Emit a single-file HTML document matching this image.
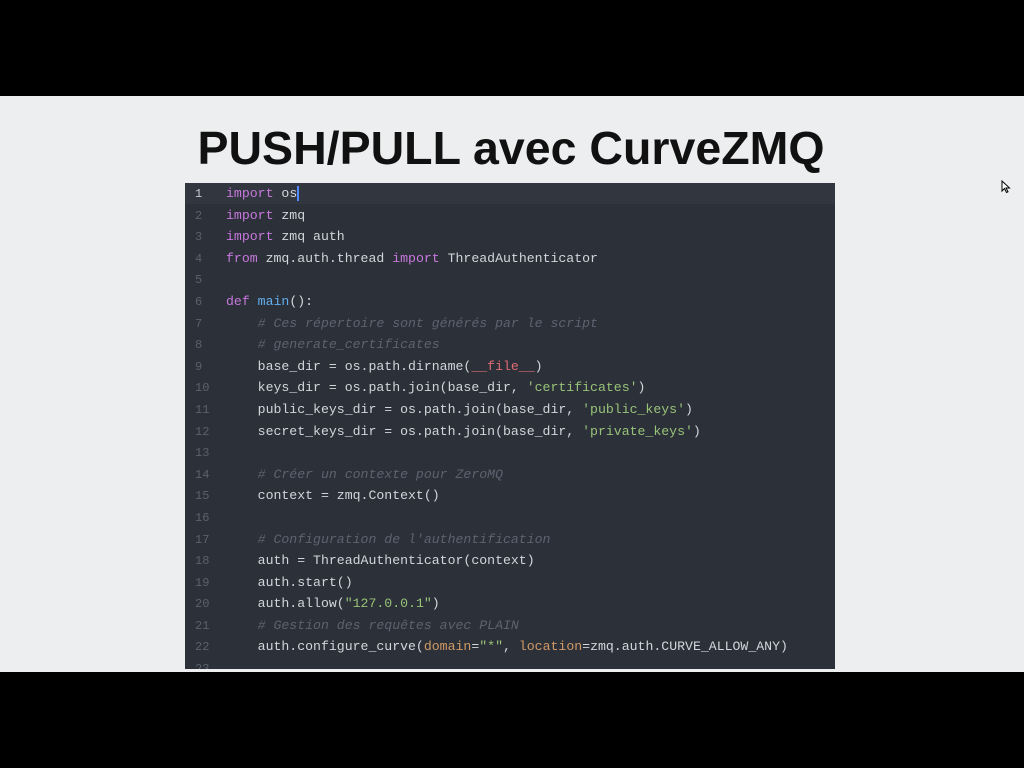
<!DOCTYPE html>
<html><head><meta charset="utf-8"><style>
html,body{margin:0;padding:0;width:1024px;height:768px;background:#000;overflow:hidden}
.slide{position:absolute;left:0;top:96px;width:1024px;height:576px;background:#eceeef}
h1{position:absolute;left:0;width:1024px;top:25px;margin:0;text-align:center;font:bold 46.5px "Liberation Sans",sans-serif;color:#111;text-indent:-2px}
.code{position:absolute;left:185px;top:87px;width:650px;height:486px;background:#2c3038;overflow:hidden}
.hl{position:absolute;left:0;top:0;width:650px;height:21px;background:#32363e}
pre{position:absolute;left:0;top:0;margin:0;font:13.2px/21.6px "Liberation Mono",monospace;color:#d2d6dc}
.n{display:inline-block;vertical-align:top;line-height:23px;height:21.6px;width:41px;padding-left:10px;box-sizing:border-box;color:#5b616b;font-size:12px}
.k{color:#c678dd}.f{color:#61afef}.c{color:#5c6370;font-style:italic}.s{color:#98c379}.r{color:#e06c75}.o{color:#d19a66}
.cur{border-right:2px solid #528bff}
</style></head><body>
<div class="slide">
<h1>PUSH/PULL avec CurveZMQ</h1>
<div class="code"><div class="hl"></div>
<pre><span class="n" style="color:#c8ccd2">1</span><span class="k">import</span> <span class="cur">os</span>
<span class="n">2</span><span class="k">import</span> zmq
<span class="n">3</span><span class="k">import</span> zmq auth
<span class="n">4</span><span class="k">from</span> zmq.auth.thread <span class="k">import</span> ThreadAuthenticator
<span class="n">5</span>
<span class="n">6</span><span class="k">def</span> <span class="f">main</span>():
<span class="n">7</span>    <span class="c"># Ces répertoire sont générés par le script</span>
<span class="n">8</span>    <span class="c"># generate_certificates</span>
<span class="n">9</span>    base_dir = os.path.dirname(<span class="r">__file__</span>)
<span class="n">10</span>    keys_dir = os.path.join(base_dir, <span class="s">'certificates'</span>)
<span class="n">11</span>    public_keys_dir = os.path.join(base_dir, <span class="s">'public_keys'</span>)
<span class="n">12</span>    secret_keys_dir = os.path.join(base_dir, <span class="s">'private_keys'</span>)
<span class="n">13</span>
<span class="n">14</span>    <span class="c"># Créer un contexte pour ZeroMQ</span>
<span class="n">15</span>    context = zmq.Context()
<span class="n">16</span>
<span class="n">17</span>    <span class="c"># Configuration de l'authentification</span>
<span class="n">18</span>    auth = ThreadAuthenticator(context)
<span class="n">19</span>    auth.start()
<span class="n">20</span>    auth.allow(<span class="s">"127.0.0.1"</span>)
<span class="n">21</span>    <span class="c"># Gestion des requêtes avec PLAIN</span>
<span class="n">22</span>    auth.configure_curve(<span class="o">domain</span>=<span class="s">"*"</span>, <span class="o">location</span>=zmq.auth.CURVE_ALLOW_ANY)
<span class="n">23</span></pre></div>
<svg style="position:absolute;left:1001px;top:84px" width="10" height="14" viewBox="0 0 10 14"><path d="M1 1 L1 11 L3.5 8.5 L5.5 12.5 L7 11.8 L5 8 L8.5 8 Z" fill="#fff" stroke="#000" stroke-width="1"/></svg>
</div>
</body></html>
